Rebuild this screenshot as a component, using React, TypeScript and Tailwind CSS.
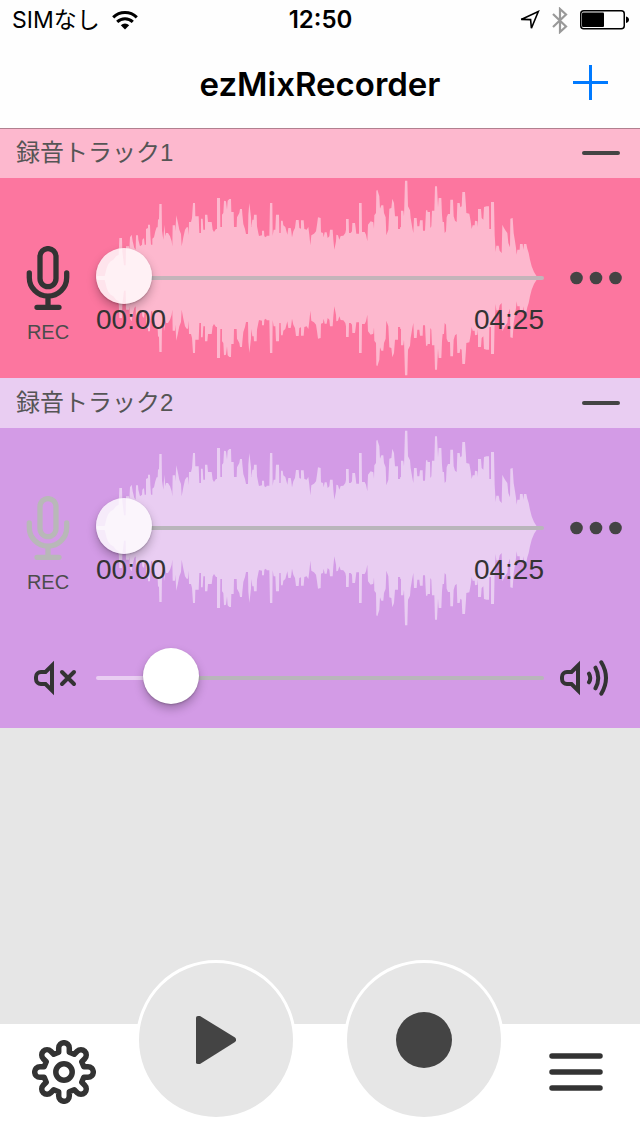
import { useState } from "react";
import clsx from "clsx";

/** Upper contour of the waveform as x,y pairs; the lower half is its mirror at y = 300. */
const WAVE = `
18,299 43,298 45,290 50,270 55,258 62,250 70,245 78,235 86,230 88,180 96,180 97,220 102,262 107,262 108,205 117,205
118,215 120,178 125,170 128,190 133,210 137,215 138,172 144,172 145,185 150,205 156,200 157,185 162,180 164,200 168,200
168,153 174,150 174,140 180,140 181,170 183,200 187,200 187,182 192,178 196,160 200,148 203,148 204,125 207,123 208,78
215,78 216,158 220,185 223,140 226,175 228,165 234,165 240,175 245,190 247,205 248,142 255,142 256,160 259,112 264,135
268,155 273,168 275,205 280,178 285,155 290,148 294,148 296,172 297,132 303,132 306,120 309,75 315,75 316,115 326,115
328,165 333,165 333,122 338,122 340,155 345,155 345,110 352,110 354,132 365,132 368,155 372,162 378,153 381,153 381,60
390,60 391,147 396,147 396,110 400,105 402,68 408,70 411,95 413,68 418,63 423,63 424,102 431,102 432,147 440,147 441,118
448,105 450,93 456,93 457,108 460,138 465,153 468,168 474,168 475,110 478,75 483,118 484,147 487,125 491,125 492,110
500,110 501,145 505,165 507,174 516,172 516,158 522,158 523,175 528,178 530,173 538,173 540,75 547,75 548,173 551,155
556,155 558,110 567,110 568,165 572,165 573,128 578,128 580,142 586,147 592,170 595,150 602,150 604,160 606,178 610,160
615,150 618,126 626,126 628,150 633,152 633,127 641,127 643,153 650,155 655,147 658,170 661,202 664,172 672,167 678,160
681,140 684,118 692,120 693,163 699,165 701,178 704,163 710,163 713,180 718,175 720,155 728,155 730,185 733,215 738,190
739,170 744,172 748,185 752,174 760,173 766,165 768,155 768,123 776,123 777,165 782,165 786,160 787,135 795,135 797,150
799,167 807,167 807,75 815,75 816,162 824,162 828,170 832,190 834,140 842,130 850,133 852,152 853,112 858,105 859,38
862,35 868,55 870,92 874,82 880,82 882,105 887,118 889,172 895,155 898,92 904,90 907,62 912,75 915,115 924,115 924,153
930,153 931,147 933,147 933,98 940,98 942,115 945,8 952,8 954,85 960,97 962,120 967,150 970,165 972,120 980,120 982,145
988,145 990,127 998,127 999,158 1005,158 1008,97 1012,97 1013,102 1020,102 1021,150 1024,145 1026,98 1033,98 1035,25
1041,25 1044,88 1046,60 1054,60 1056,110 1058,132 1062,132 1064,165 1068,160 1070,118 1074,108 1080,108 1081,65 1089,65
1091,115 1095,128 1100,132 1102,75 1109,75 1111,88 1115,85 1117,42 1125,42 1128,85 1129,105 1138,107 1142,130 1145,153
1148,142 1154,142 1155,128 1162,130 1164,147 1164,93 1173,93 1175,120 1180,125 1182,87 1190,85 1197,85 1198,153 1203,153
1203,72 1212,72 1214,170 1217,222 1219,203 1226,203 1229,218 1235,225 1237,140 1242,150 1247,158 1252,165 1255,195
1260,208 1261,122 1268,120 1271,165 1275,190 1278,210 1280,230 1282,215 1289,215 1290,198 1298,198 1300,215 1302,198
1309,198 1312,212 1316,225 1320,245 1325,265 1332,282 1340,295 1344,300
`
  .trim()
  .split(/\s+/)
  .map((pair) => pair.split(",").map(Number));

const WAVE_POINTS = [...WAVE, ...[...WAVE].reverse().map(([x, y]) => [x, 600 - y])]
  .map((p) => p.join(","))
  .join(" ");

/** Eight-tooth gear outline around 0,0. */
const GEAR_PATH = (() => {
  const parts: string[] = [];
  for (let i = 0; i < 8; i++) {
    const a = (i * Math.PI) / 4;
    const at = (x: number, y: number) =>
      `${(x * Math.cos(a) - y * Math.sin(a)).toFixed(2)} ${(x * Math.sin(a) + y * Math.cos(a)).toFixed(2)}`;
    parts.push(`${i ? "L" : "M"}${at(-5.3, -19.8)} L${at(-5.3, -24)} A5.3 5.3 0 0 1 ${at(5.3, -24)} L${at(5.3, -19.8)}`);
  }
  return parts.join(" ") + "Z";
})();

type Theme = "pink" | "purple";

const THEMES = {
  pink: { bar: "bg-[#fdb8ce]", body: "bg-[#fc769f]", wave: "text-[#fdb8ce]", fill: "#fdb8ce", rail: "#c4b4ba" },
  purple: { bar: "bg-[#e9cdf2]", body: "bg-[#d39be6]", wave: "text-[#e9cdf2]", fill: "#e9cdf2", rail: "#b9b5bb" },
};

function StatusBar() {
  return (
    <div className="grid h-10 grid-cols-3 items-center pr-[11px] pl-3 text-[23px] leading-10">
      <div className="flex items-center gap-3">
        <span className="font-['Inter','Noto_Sans_CJK_JP',sans-serif]">SIMなし</span>
        <svg viewBox="0 0 26 19" className="h-[19px] w-[26px]" fill="none" stroke="currentColor" aria-hidden="true">
          <path d="M1.2 6.4a16.8 16.8 0 0 1 23.6 0" strokeWidth="3" />
          <path d="M5.2 10.9a11.2 11.2 0 0 1 15.6 0" strokeWidth="3" />
          <path d="M13 18.6 8.8 14.3a6 6 0 0 1 8.4 0Z" fill="currentColor" stroke="none" />
        </svg>
      </div>
      <span className="text-center font-['Inter',sans-serif] text-[24px] font-semibold">12:50</span>
      <div className="flex items-center justify-end gap-3">
        <svg viewBox="0 0 21 21" className="size-[21px]" fill="none" stroke="currentColor" strokeWidth="1.6" aria-hidden="true">
          <path d="M2.2 9.4 19.3 1.5 12.4 18.2 11.6 9.6Z" />
        </svg>
        <svg viewBox="0 0 16 27" className="h-[27px] w-4 text-[#999]" fill="none" stroke="currentColor" strokeWidth="2.2" aria-hidden="true">
          <path d="M1 7 14 19.5 8 25V2l6 5.5L1 20" />
        </svg>
        <svg viewBox="0 0 49 20" className="h-5 w-[49px]" aria-hidden="true">
          <rect x="0.75" y="0.75" width="43.5" height="18" rx="3" fill="none" stroke="currentColor" strokeWidth="1.5" />
          <rect x="2" y="2.5" width="22" height="14.5" rx="1" />
          <path d="M46 6.5c4 .5 4 6 0 6.5Z" />
        </svg>
      </div>
    </div>
  );
}

function NavBar() {
  return (
    <div className="grid h-22 grid-cols-[1fr_auto_1fr] items-center">
      <h1 className="col-start-2 pt-0.5 font-['Inter',sans-serif] text-[33px] font-semibold">ezMixRecorder</h1>
      <button type="button" aria-label="Add track" className="mr-8 mb-1 cursor-pointer justify-self-end text-[#007aff]">
        <svg viewBox="0 0 35 35" className="size-[35px]" stroke="currentColor" strokeWidth="3">
          <path d="M17.5 0v35M0 17.5h35" />
        </svg>
      </button>
    </div>
  );
}

function MicIcon() {
  return (
    <svg viewBox="0 0 44 64" className="h-16 w-11" fill="none" stroke="currentColor" strokeWidth="5.3" strokeLinecap="round">
      <rect x="14" y="2.6" width="16" height="38" rx="8" />
      <path d="M3.3 27v4.5a18.7 18.7 0 0 0 37.4 0V27M22 50.5v10M11 61.3h22" />
    </svg>
  );
}

const SPEAKER_PATH = "M18 5.5V30.5L11.5 24H7a5 5 0 0 1-5-5V17a5 5 0 0 1 5-5h4.5Z";

function MuteIcon() {
  return (
    <svg viewBox="0 0 44 36" className="h-9 w-11" fill="none" stroke="currentColor" strokeWidth="4" aria-hidden="true">
      <path d={SPEAKER_PATH} />
      <path d="m28 12 12 12m0-12L28 24" strokeLinecap="round" />
    </svg>
  );
}

function LoudIcon() {
  return (
    <svg viewBox="0 0 50 36" className="h-9 w-[50px]" fill="none" stroke="currentColor" strokeWidth="4" aria-hidden="true">
      <path d={SPEAKER_PATH} />
      <path d="M29 13.7q2.5 4.3 0 8.6M35.5 7.7q5.500 10.3 0 20.6M41.3 2.3q9.4 15.7 0 31.4" strokeLinecap="round" />
    </svg>
  );
}

type SliderProps = {
  label: string;
  value: number;
  onChange: (value: number) => void;
  theme: Theme;
  translucent?: boolean;
};

function Slider({ label, value, onChange, theme, translucent }: SliderProps) {
  const { fill, rail } = THEMES[theme];
  // the filled part runs to the far edge of the thumb, so the rail never shows through it
  const stop = `calc(55px + (100% - 56px) * ${value / 100})`;

  return (
    <input
      type="range"
      aria-label={label}
      min={0}
      max={100}
      value={value}
      onChange={(e) => onChange(Number(e.target.value))}
      style={{ "--rail": `linear-gradient(to right, ${fill} ${stop}, ${rail} ${stop})` } as React.CSSProperties}
      className={clsx(
        "relative block h-[52px] w-full cursor-pointer appearance-none bg-transparent",
        "[&::-webkit-slider-runnable-track]:h-1 [&::-webkit-slider-runnable-track]:rounded-full [&::-webkit-slider-runnable-track]:bg-(image:--rail)",
        "[&::-webkit-slider-thumb]:-mt-7 [&::-webkit-slider-thumb]:size-14 [&::-webkit-slider-thumb]:appearance-none [&::-webkit-slider-thumb]:rounded-full",
        "[&::-webkit-slider-thumb]:shadow-[0_5px_10px_rgba(0,0,0,0.25),0_1px_2px_rgba(0,0,0,0.2)]",
        translucent ? "[&::-webkit-slider-thumb]:bg-white/80" : "[&::-webkit-slider-thumb]:bg-white",
      )}
    />
  );
}

type TrackProps = {
  name: string;
  theme: Theme;
  armed?: boolean;
  hasVolume?: boolean;
};

function Track({ name, theme, armed, hasVolume }: TrackProps) {
  const [position, setPosition] = useState(0);
  const [volume, setVolume] = useState(12);
  const colors = THEMES[theme];

  return (
    <section aria-label={name}>
      <div className={clsx("flex h-[50px] items-center justify-between pr-5 pl-4", colors.bar)}>
        <h2 className="font-['Liberation_Sans','Noto_Sans_CJK_JP',sans-serif] text-[24px] leading-8 text-[#555]">{name}</h2>
        <button type="button" aria-label={`Remove ${name}`} className="cursor-pointer text-[#444]">
          <svg viewBox="0 0 38 4" className="h-1 w-[38px]" stroke="currentColor" strokeWidth="4" strokeLinecap="round">
            <path d="M2 2h34" />
          </svg>
        </button>
      </div>

      <div className={colors.body}>
        <div className="grid h-[200px] grid-cols-[96px_1fr_96px]">
          <button type="button" aria-pressed={!!armed} className="flex cursor-pointer flex-col items-center gap-2 pt-[68px]">
            <span className={armed ? "text-[#333]" : "text-[#b8b8b8]"}>
              <MicIcon />
            </span>
            <span className="text-[20px] leading-7 text-[#4c4c4c]">REC</span>
          </button>

          <div className="relative pt-[74px]">
            <svg viewBox="18 0 1344 600" preserveAspectRatio="none" className={clsx("absolute inset-0 size-full", colors.wave)} aria-hidden="true">
              <polygon points={WAVE_POINTS} fill="currentColor" />
            </svg>
            <Slider label={`${name} position`} value={position} onChange={setPosition} theme={theme} translucent />
            <div className="relative flex justify-between text-[28px] leading-8 text-[#333]">
              <span>00:00</span>
              <span>04:25</span>
            </div>
          </div>

          <button type="button" aria-label={`${name} options`} className="flex cursor-pointer items-center justify-center pl-2 text-[#444]">
            <svg viewBox="0 0 54 14" className="h-[14px] w-[54px]" fill="currentColor">
              <circle cx="7.5" cy="7" r="6.3" />
              <circle cx="27" cy="7" r="6.3" />
              <circle cx="46.5" cy="7" r="6.3" />
            </svg>
          </button>
        </div>

        {hasVolume && (
          <div className="grid h-[100px] grid-cols-[96px_1fr_96px] items-center text-[#333]">
            <div className="flex justify-end pr-[18px]">
              <MuteIcon />
            </div>
            <Slider label={`${name} volume`} value={volume} onChange={setVolume} theme={theme} />
            <div className="pl-4">
              <LoudIcon />
            </div>
          </div>
        )}
      </div>
    </section>
  );
}

function Toolbar() {
  const round =
    "flex size-40 cursor-pointer items-center justify-center rounded-full border-[3px] border-white bg-[#e6e6e6] text-[#444]";

  return (
    <footer className="flex h-28 items-start bg-white text-[#333]">
      <button type="button" aria-label="Settings" className="flex h-24 w-32 cursor-pointer items-center justify-center">
        <svg viewBox="-32 -32 64 64" className="size-16" fill="none" stroke="currentColor" strokeWidth="5.5" strokeLinejoin="round">
          <path d={GEAR_PATH} />
          <circle r="8.2" />
        </svg>
      </button>
      <div className="-mt-16 flex flex-1 justify-center gap-12">
        <button type="button" aria-label="Play" className={round}>
          <svg viewBox="0 0 40 48" className="h-12 w-10" fill="currentColor">
            <path d="M0 1.5Q0 0 2 0H4L39 21.5Q41.500 24 39 26L4 48H2Q0 48 0 46.5Z" />
          </svg>
        </button>
        <button type="button" aria-label="Record" className={round}>
          <span className="size-14 rounded-full bg-[#444]" />
        </button>
      </div>
      <button type="button" aria-label="Menu" className="flex h-24 w-32 cursor-pointer items-center justify-center">
        <svg viewBox="0 0 54 40" className="h-10 w-[54px]" stroke="currentColor" strokeWidth="5.5" strokeLinecap="round">
          <path d="M3 4h48M3 20h48M3 36h48" />
        </svg>
      </button>
    </footer>
  );
}

export default function App() {
  return (
    <div className="flex min-h-screen flex-col bg-[#e6e6e6] font-['Liberation_Sans',Arial,sans-serif] text-black">
      <header className="relative z-10 bg-[#fefefe] shadow-[0_1px_0_#b1808f]">
        <StatusBar />
        <NavBar />
      </header>
      <main className="flex-1">
        <Track name="録音トラック1" theme="pink" armed />
        <Track name="録音トラック2" theme="purple" hasVolume />
      </main>
      <Toolbar />
    </div>
  );
}
